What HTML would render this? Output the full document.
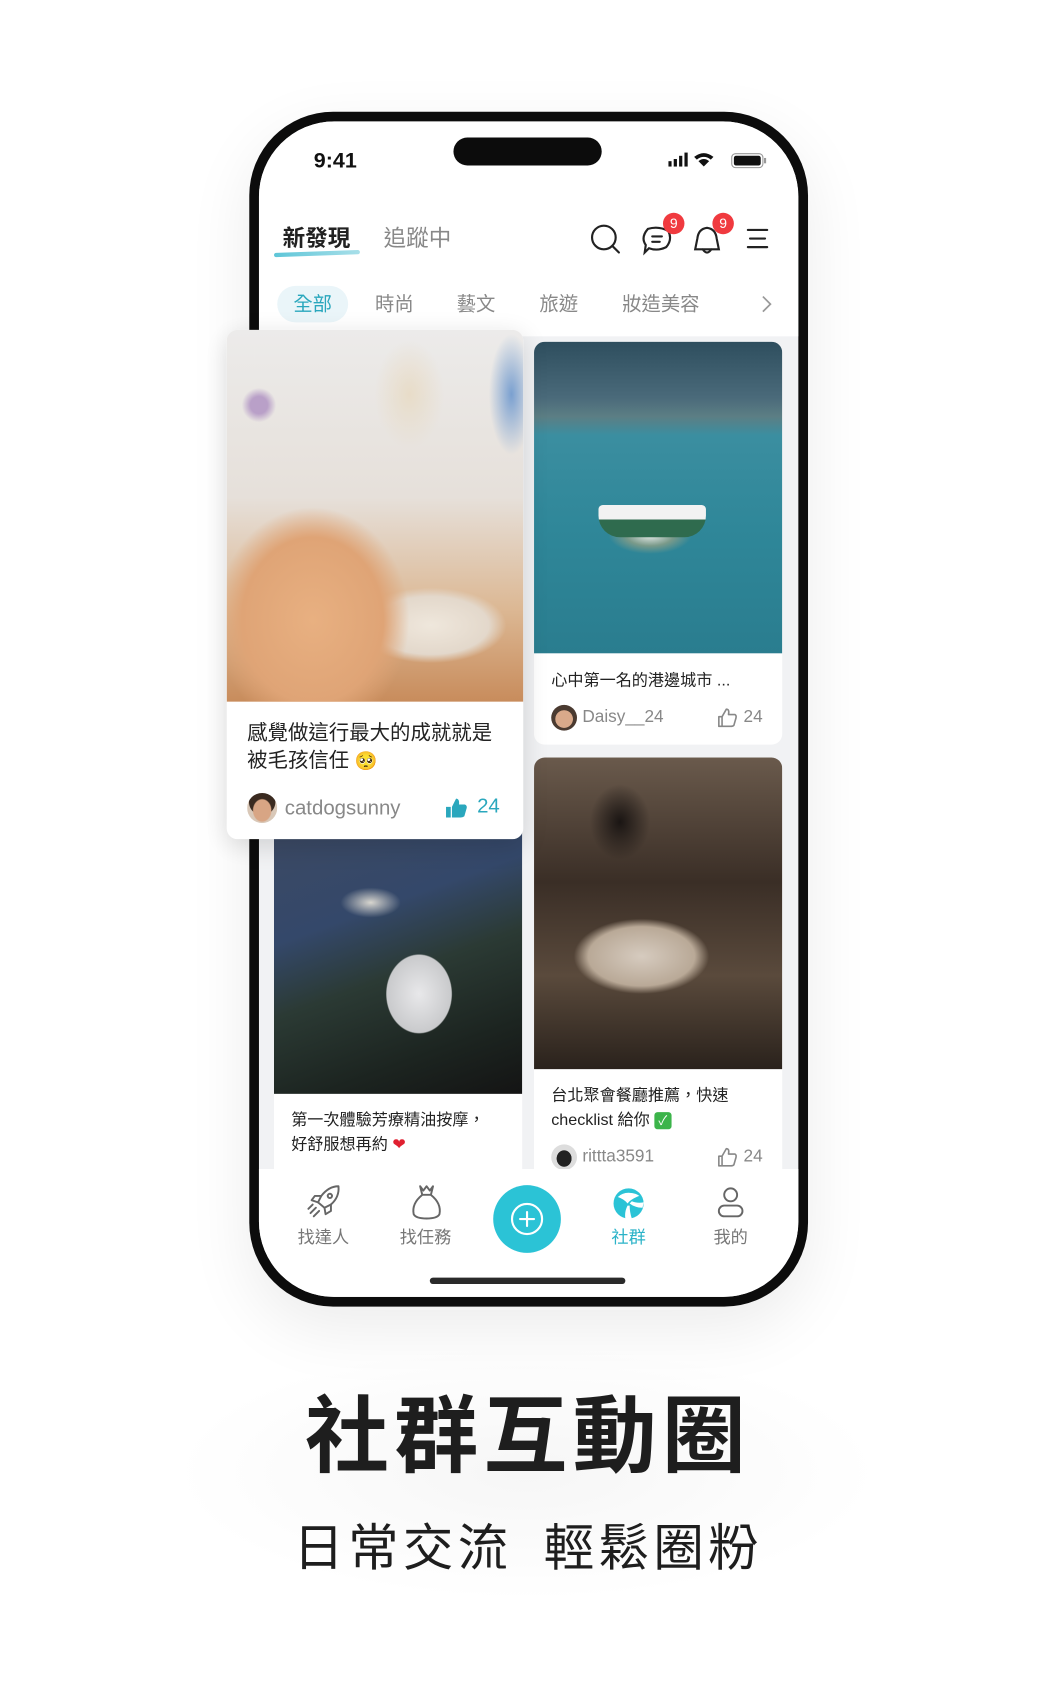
<!DOCTYPE html>
<html><head><meta charset="utf-8">
<style>
*{margin:0;padding:0;box-sizing:border-box}
html,body{width:1056px;height:1684px;overflow:hidden;background:#fff}
body{font-family:"Liberation Sans","Noto Sans CJK TC",sans-serif}
#s{position:absolute;left:0;top:0;width:983px;height:1567px;transform:scale(1.0745);transform-origin:0 0}
.a{position:absolute}
.phone{left:232px;top:104px;width:520px;height:1112px;border-radius:78px;background:#0c0c0c;box-shadow:0 20px 60px rgba(0,0,0,.08)}
.screen{left:241px;top:113px;width:502px;height:1094px;border-radius:70px;background:#f1f2f4;overflow:hidden}
.t{white-space:nowrap;line-height:1}
.card{background:#fff;border-radius:10px;overflow:hidden}
.cap{font-size:15px;color:#222;font-family:"Liberation Sans","Noto Sans CJK TC",sans-serif}
</style></head><body><div id="s">
<div class="a" style="left:160px;top:1250px;width:660px;height:240px;background:radial-gradient(ellipse at center,#f6f6f6 0%,#fff 70%)"></div>
<div class="a phone"></div>
<div class="a screen">
  <div class="a" style="left:0;top:0;width:502px;height:200px;background:#fff"></div>
</div>
<div class="a t" style="left:292px;top:140px;font-size:20px;font-weight:600;color:#111">9:41</div>
<div class="a" style="left:422px;top:128px;width:138px;height:26px;border-radius:13px;background:#0c0c0c"></div>
<svg class="a" style="left:622px;top:140px" width="92" height="18" viewBox="0 0 92 18">
<rect x="0" y="10" width="3" height="5" fill="#111"/><rect x="5" y="8" width="3" height="7" fill="#111"/><rect x="10" y="5" width="3" height="10" fill="#111"/><rect x="15" y="2" width="3" height="13" fill="#111"/>
<path d="M24 6 Q33 -1 42 6 L39.5 8.5 Q33 3.5 26.5 8.5Z M28 10 Q33 6 38 10 L33 15Z" fill="#111"/>
<rect x="59" y="3" width="29" height="13" rx="3.5" fill="none" stroke="#999" stroke-width="1"/><rect x="61" y="5" width="25" height="9" rx="2" fill="#111"/><rect x="89" y="7" width="2" height="5" fill="#999"/>
</svg>
<div class="a t" style="left:263px;top:212px;font-size:21px;font-weight:700;color:#222">新發現</div>
<div class="a t" style="left:357px;top:212px;font-size:21px;color:#888">追蹤中</div>
<div class="a" style="left:255px;top:234px;width:80px;height:4px;border-radius:3px;background:linear-gradient(90deg,#5ec6d8,#a8dfe9);transform:rotate(-2deg)"></div>
<svg class="a" style="left:546px;top:205px" width="180" height="36" viewBox="0 0 180 36" fill="none" stroke="#222" stroke-width="2" stroke-linecap="round">
<circle cx="16" cy="16" r="11"/><path d="M24 24 L30 30"/>
<path d="M57 8 Q67 5 76 10 Q80 18 74 25 Q66 29 58 26 L54 30 L55 23 Q50 16 57 8Z"/><path d="M61 15 H70 M61 20 H68"/>
<path d="M112 7 Q104 8 103 17 L101 27 H123 L121 17 Q120 8 112 7Z M108 27 Q112 33 116 27"/>
<path d="M150 9 H168 M152 17 H166 M150 25 H168"/>
</svg>
<div class="a" style="left:617px;top:198px;width:20px;height:20px;border-radius:50%;background:#f03a3f;color:#fff;font-size:13px;text-align:center;line-height:20px">9</div>
<div class="a" style="left:663px;top:198px;width:20px;height:20px;border-radius:50%;background:#f03a3f;color:#fff;font-size:13px;text-align:center;line-height:20px">9</div>
<div class="a" style="left:258px;top:266px;width:66px;height:34px;border-radius:17px;background:#eaf5f9"></div>
<div class="a t" style="left:273px;top:274px;font-size:18px;color:#2aa7bd">全部</div>
<div class="a t" style="left:349px;top:274px;font-size:18px;color:#888">時尚</div>
<div class="a t" style="left:425px;top:274px;font-size:18px;color:#888">藝文</div>
<div class="a t" style="left:502px;top:274px;font-size:18px;color:#888">旅遊</div>
<div class="a t" style="left:579px;top:274px;font-size:18px;color:#888">妝造美容</div>
<svg class="a" style="left:706px;top:274px" width="14" height="18"><path d="M4 2 L11 9 L4 16" fill="none" stroke="#999" stroke-width="1.6"/></svg>

<div class="a card" style="left:255px;top:760px;width:231px;height:340px;border-radius:0">
  <div class="a" style="left:0;top:0;width:231px;height:258px;background:radial-gradient(ellipse 50px 60px at 135px 165px,#e8e8ea 0%,#c9cacc 60%,transparent 62%),radial-gradient(ellipse 40px 20px at 90px 80px,#d8d6cf,transparent 70%),linear-gradient(160deg,#3d4a63 0%,#34486a 35%,#2b3a34 55%,#1c2420 80%,#141414 100%)"></div>
  <div class="a t cap" style="left:16px;top:275px">第一次體驗芳療精油按摩，</div>
  <div class="a t cap" style="left:16px;top:298px">好舒服想再約 <span style="color:#e02030">❤</span></div>
</div>
<div class="a card" style="left:497px;top:318px;width:231px;height:375px">
  <div class="a" style="left:0;top:0;width:231px;height:290px;background:radial-gradient(ellipse 55px 25px at 108px 180px,#e8ecea 0%,#7a9a8a 40%,transparent 70%),linear-gradient(180deg,#2e4e5e 0%,#4a6a7a 18%,#5c7e84 24%,#3b8ea0 30%,#2f8799 60%,#2a7d8f 100%)"></div>
  <div class="a" style="left:60px;top:152px;width:100px;height:30px;background:linear-gradient(180deg,#f2f2f2 0 45%,#2f6b4e 45% 100%);border-radius:4px 4px 20px 20px"></div>
  <div class="a t cap" style="left:16px;top:308px;font-size:15px">心中第一名的港邊城市 ...</div>
  <div class="a" style="left:16px;top:338px;width:24px;height:24px;border-radius:50%;background:radial-gradient(circle at 50% 55%,#d9a98a 0 45%,#4a3a30 47%)"></div>
  <div class="a t" style="left:45px;top:342px;font-size:16px;color:#888">Daisy__24</div>
  <svg class="a" style="left:170px;top:340px" width="20" height="20" viewBox="0 0 20 20" fill="none" stroke="#888" stroke-width="1.5" stroke-linejoin="round"><path d="M2 9 H5 V18 H2Z M5 9 L9 2 Q12 2 11 7 H17 Q18.5 8 18 10 L16 17 Q15 18 13 18 H5"/></svg>
  <div class="a t" style="left:195px;top:342px;font-size:16px;color:#888">24</div>
</div>
<div class="a card" style="left:497px;top:705px;width:231px;height:400px;border-radius:10px 10px 0 0">
  <div class="a" style="left:0;top:0;width:231px;height:290px;background:radial-gradient(ellipse 90px 50px at 100px 185px,#d6cbbf 0%,#b9a997 55%,transparent 70%),radial-gradient(ellipse 50px 30px at 100px 180px,#c3653a,transparent 70%),radial-gradient(ellipse 40px 50px at 80px 60px,#1a1513,transparent 70%),linear-gradient(180deg,#6a5a4c 0%,#3a2e26 40%,#5a4a3c 70%,#2a221c 100%)"></div>
  <div class="a t cap" style="left:16px;top:307px">台北聚會餐廳推薦，快速</div>
  <div class="a t cap" style="left:16px;top:330px">checklist 給你 <span style="display:inline-block;width:16px;height:16px;background:#3cb44a;border-radius:3px;color:#fff;font-size:12px;text-align:center;line-height:16px">✓</span></div>
  <div class="a" style="left:16px;top:360px;width:24px;height:24px;border-radius:50%;background:radial-gradient(ellipse at 50% 55%,#222 0 40%,#ddd 42%)"></div>
  <div class="a t" style="left:45px;top:364px;font-size:16px;color:#888">rittta3591</div>
  <svg class="a" style="left:170px;top:362px" width="20" height="20" viewBox="0 0 20 20" fill="none" stroke="#888" stroke-width="1.5" stroke-linejoin="round"><path d="M2 9 H5 V18 H2Z M5 9 L9 2 Q12 2 11 7 H17 Q18.5 8 18 10 L16 17 Q15 18 13 18 H5"/></svg>
  <div class="a t" style="left:195px;top:364px;font-size:16px;color:#888">24</div>
</div>
<div class="a card" style="left:211px;top:307px;width:276px;height:474px;box-shadow:0 6px 24px rgba(0,0,0,.14)">
  <div class="a" style="left:0;top:0;width:276px;height:346px;background:radial-gradient(ellipse 120px 140px at 80px 270px,#e8b081 0%,#dfa476 55%,transparent 75%),radial-gradient(ellipse 90px 45px at 190px 275px,#efe7dc 0%,#e3d8cb 60%,transparent 78%),radial-gradient(ellipse 45px 70px at 170px 60px,#e8dcc8 0%,transparent 72%),radial-gradient(ellipse 30px 80px at 265px 60px,#7aa0d0 0%,transparent 70%),radial-gradient(circle at 30px 70px,#b9a0c8 0 8px,transparent 16px),linear-gradient(180deg,#ecebea 0%,#e6e0da 45%,#dcb894 75%,#c88c5c 100%)"></div>
  <div class="a t" style="left:19px;top:366px;font-size:19px;color:#222">感覺做這行最大的成就就是</div>
  <div class="a t" style="left:19px;top:392px;font-size:19px;color:#222">被毛孩信任 <span style="font-size:17px">🥺</span></div>
  <div class="a" style="left:19px;top:431px;width:28px;height:28px;border-radius:50%;background:radial-gradient(ellipse 9px 11px at 50% 58%,#d8a584 0 90%,transparent 100%),radial-gradient(circle at 50% 30%,#3a2a20 0 50%,#d9c8b8 52%)"></div>
  <div class="a t" style="left:54px;top:436px;font-size:19px;color:#888">catdogsunny</div>
  <svg class="a" style="left:203px;top:434px" width="22" height="22" viewBox="0 0 20 20" fill="#2aa7bd"><path d="M1 9 H5 V18 H1Z M6 9 L9.5 2 Q12.5 2 12 7 H17 Q19 8 18.5 10 L16.5 17 Q15.5 18 13.5 18 H6Z"/></svg>
  <div class="a t" style="left:233px;top:434px;font-size:19px;color:#2aa7bd">24</div>
</div>
<div class="a" style="left:241px;top:1088px;width:502px;height:119px;background:#fff;border-radius:0 0 70px 70px"></div>
<svg class="a" style="left:282px;top:1100px" width="42" height="38" viewBox="0 0 42 38" fill="none" stroke="#666" stroke-width="1.8" stroke-linecap="round" stroke-linejoin="round">
<path d="M33 4 Q24 4 17 13 L14 19 L20 24 L26 21 Q34 14 33 4Z"/><circle cx="25" cy="13" r="2"/><path d="M17 13 L11 13 L8 17 L14 19 M26 21 L26 27 L21 30 L20 24 M12 24 L7 29 M15 27 L10 32 M9 21 L5 25"/>
</svg>
<svg class="a" style="left:378px;top:1100px" width="38" height="38" viewBox="0 0 38 38" fill="none" stroke="#666" stroke-width="1.8" stroke-linejoin="round">
<path d="M13 4 L16 8 L19 4 L22 8 L25 4 L23 12 H15Z M15 12 Q5 20 7 30 Q9 34 19 34 Q29 34 31 30 Q33 20 23 12"/>
</svg>
<div class="a t" style="left:277px;top:1145px;font-size:16px;color:#777">找達人</div>
<div class="a t" style="left:372px;top:1145px;font-size:16px;color:#777">找任務</div>
<div class="a" style="left:459px;top:1103px;width:63px;height:63px;border-radius:50%;background:#2bc3d6"></div>
<svg class="a" style="left:474px;top:1118px" width="33" height="33" viewBox="0 0 33 33" fill="none" stroke="#fff" stroke-width="2" stroke-linecap="round"><circle cx="16.5" cy="16.5" r="14"/><path d="M16.5 10 V23 M10 16.5 H23"/></svg>
<svg class="a" style="left:569px;top:1104px" width="32" height="32" viewBox="0 0 32 32"><circle cx="16" cy="16" r="14" fill="#2bc3d6"/><path d="M6 10 Q12 12 15 16 Q18 12 26 9 Q22 6 16 6 Q10 6 6 10Z M15 18 Q12 24 13 30 L19 30 Q17 24 17 18Z M17 16 Q22 20 29 20 L30 15 Q24 16 19 14Z" fill="#fff"/></svg>
<div class="a t" style="left:569px;top:1145px;font-size:16px;color:#2bb3c8">社群</div>
<svg class="a" style="left:664px;top:1102px" width="32" height="34" viewBox="0 0 32 34" fill="none" stroke="#666" stroke-width="1.8"><circle cx="16" cy="10" r="6"/><rect x="5" y="20" width="22" height="10" rx="5"/></svg>
<div class="a t" style="left:664px;top:1145px;font-size:16px;color:#777">我的</div>
<div class="a" style="left:400px;top:1189px;width:182px;height:6px;border-radius:3px;background:#2a2a2a"></div>
<div class="a t" style="left:0;top:1292px;width:983px;text-align:center;font-family:'Noto Sans CJK TC','WenQuanYi Zen Hei',sans-serif;font-size:78px;font-weight:700;color:#1e1e1e;letter-spacing:5px">社群互動圈</div>
<div class="a t" style="left:0;top:1413px;width:983px;text-align:center;font-family:'Noto Sans CJK TC','WenQuanYi Zen Hei',sans-serif;font-size:47px;font-weight:400;color:#1e1e1e;letter-spacing:4px">日常交流&nbsp;&nbsp;輕鬆圈粉</div>
</div></body></html>
